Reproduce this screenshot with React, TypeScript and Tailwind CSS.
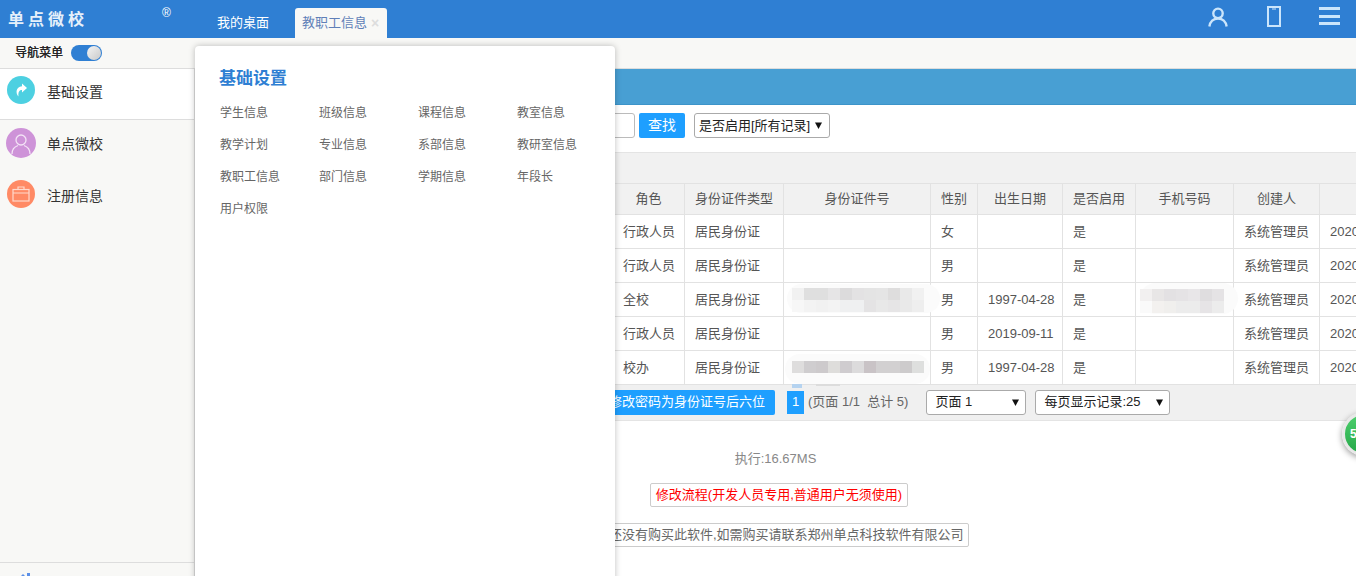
import React from 'react';

const cols = [417, 72, 99, 147, 47, 85, 73, 98, 86, 120];

const headers = ['', '角色', '身份证件类型', '身份证件号', '性别', '出生日期', '是否启用', '手机号码', '创建人', ''];

const rows = [
    { role: '行政人员', sex: '女', birth: '' },
    { role: '行政人员', sex: '男', birth: '' },
    { role: '全校', sex: '男', birth: '1997-04-28', idBlur: 'a', phoneBlur: true },
    { role: '行政人员', sex: '男', birth: '2019-09-11' },
    { role: '校办', sex: '男', birth: '1997-04-28', idBlur: 'b' },
];

const menuItems = [
    '学生信息', '班级信息', '课程信息', '教室信息',
    '教学计划', '专业信息', '系部信息', '教研室信息',
    '教职工信息', '部门信息', '学期信息', '年段长',
    '用户权限',
];

const blurA = [
    ['#f1f1f1', '#dfdfdf', '#dfdfdf', '#e6e5e6', '#dcdbdc', '#e3e2e3', '#e4e4e4', '#e5e5e5', '#dedddd', '#e9e9e9', '#f1f1f1'],
    ['#f7f7f7', '#f3f3f3', '#f1f1f1', '#f3f3f3', '#eff0f1', '#eff0f1', '#e4e3e4', '#e8e8e8', '#e6e5e6', '#e9e9e9', '#eeeeee'],
];
const blurB = [
    ['#dedddd', '#cfcdcf', '#cdcacc', '#dedddb', '#cfcccf', '#dcdbdc', '#c9c3c6', '#d2d0d1', '#d2d0d1', '#cdcbcc', '#dedfde'],
];
const blurPhone = [
    ['#f2f0f0', '#e8e6e6', '#e3e1e3', '#e5e3e5', '#e8e6e8', '#dfdddf', '#e5e3e5'],
    ['#fafafa', '#f3f1ef', '#f0efed', '#ececec', '#ececec', '#e6e4e6', '#ececec'],
];

function Blur({ blocks, className, children }: { blocks: string[][]; className: string; children?: React.ReactNode }) {
    return (
        <div className={`absolute z-10 rounded-2xl bg-[#fbfbfb] ${className}`}>
            {blocks.map((line, i) => (
                <div key={i} className="flex">
                    {line.map((c, j) => (
                        <div key={j} className="h-3 w-3" style={{ backgroundColor: c }} />
                    ))}
                </div>
            ))}
            {children}
        </div>
    );
}

function Caret() {
    return (
        <svg width="7" height="7" viewBox="0 0 7 7" className="shrink-0">
            <path d="M0 .5h7L3.500 7z" fill="#111" />
        </svg>
    );
}

function FakeSelect({ label, className }: { label: string; className: string }) {
    return (
        <div className={`flex h-[25px] items-center justify-between rounded-[3px] border border-[#aaa] bg-white text-[13px] text-[#222] ${className}`}>
            <span>{label}</span>
            <Caret />
        </div>
    );
}

export default function App() {
    return (
        <div className="relative h-[576px] w-[1356px] overflow-hidden bg-white font-['Liberation_Sans','Noto_Sans_CJK_SC',sans-serif] text-[13px] text-[#555]">
            {/* Top bar */}
            <div className="flex h-[38px] items-end bg-[#2f7fd3]">
                <div className="relative h-full w-[195px] shrink-0">
                    <div className="pl-2 pt-[8px] text-[16px] leading-[24px] font-bold tracking-[4px] text-[#e6f0fa]">单点微校</div>
                    <span className="absolute left-[162px] top-[4px] text-[12px] text-white">®</span>
                </div>
                <div className="flex h-[30px] w-[100px] items-center justify-center pr-[4px] text-white">我的桌面</div>
                <div className="flex h-[30px] w-[92px] items-center gap-[4px] rounded-t-[3px] bg-[#f8f8f6] pl-[7px] text-[#5f7fb8]">
                    教职工信息
                    <span className="text-[14px] font-bold leading-none text-[#ddd]">×</span>
                </div>
                <div className="ml-auto flex h-full items-start pr-[16px] pt-[6px]">
                    <svg width="20" height="20" viewBox="0 0 22 22" fill="none" stroke="#cbe5fb" strokeWidth="2.600" className="mr-[39px] mt-px">
                        <circle cx="11" cy="7" r="5.200" />
                        <path d="M1.500 21.500C2.500 15.500 6 12.800 11 12.800s8.500 2.700 9.500 8.700" />
                    </svg>
                    <svg width="14" height="21" viewBox="0 0 14 21" fill="none" stroke="#cbe5fb" strokeWidth="2" className="mr-[38px]">
                        <rect x="1" y="1" width="12" height="19" />
                        <path d="M5 3h4" strokeWidth="1" />
                    </svg>
                    <svg width="21" height="20" viewBox="0 0 21 20" fill="#cbe5fb">
                        <rect y="1" width="21" height="3" />
                        <rect y="9" width="21" height="3" />
                        <rect y="16" width="21" height="3" />
                    </svg>
                </div>
            </div>

            {/* Sub bar */}
            <div className="flex h-[31px] items-center border-b border-[#ddd] bg-[#f8f8f6] pl-[15px]">
                <span className="text-[12px] text-[#222] [text-shadow:0.3px_0_0_#222]">导航菜单</span>
                <div className="ml-2 flex h-4 w-[31px] items-center justify-end rounded-full bg-[#2f7fd3] pr-[1px]">
                    <div className="h-[14px] w-[14px] rounded-full bg-gradient-to-br from-[#f5f5f5] to-[#c9c9c9]" />
                </div>
            </div>

            <div className="flex h-[507px]">
                {/* Sidebar */}
                <div className="flex w-[195px] shrink-0 flex-col border-r border-[#ddd] bg-[#f8f8f6] text-[14px] text-[#333]">
                    <div className="flex h-[51px] items-center gap-3 border-b border-[#ddd] bg-white pb-1 pl-[7px]">
                        <div className="-mt-1 flex h-7 w-7 items-center justify-center rounded-full bg-[#4dd0e1]">
                            <svg width="16" height="16" viewBox="0 0 16 16" fill="#fff">
                                <path d="M9 1.500l5 4.500-5 4.500V8C6.500 8 5 9.500 5.500 14.500 2.500 11.500 2.500 5 9 4.300z" />
                            </svg>
                        </div>
                        基础设置
                    </div>
                    <div className="flex h-[52px] items-center gap-3 pb-1 pl-[6px]">
                        <div className="-mr-px -mt-[3px] flex h-[30px] w-[30px] items-center justify-center overflow-hidden rounded-full bg-[#ce93d8]">
                            <svg width="22" height="24" viewBox="0 0 22 24" fill="none" stroke="#f3e3f6" strokeWidth="1.300">
                                <circle cx="11" cy="9" r="5" />
                                <path d="M2 23c0-5 3-7.500 6-8.500M20 23c0-5-3-7.500-6-8.500" />
                            </svg>
                        </div>
                        单点微校
                    </div>
                    <div className="flex h-[52px] items-center gap-3 pb-1 pl-[7px]">
                        <div className="-mt-1 flex h-7 w-7 items-center justify-center rounded-full bg-[#ff8a65]">
                            <svg width="18" height="16" viewBox="0 0 18 16" fill="none" stroke="#ffd9cc" strokeWidth="1.200">
                                <rect x="1" y="3.500" width="16" height="11.500" />
                                <path d="M6 3.500V1h6v2.500M1 7h16" />
                            </svg>
                        </div>
                        注册信息
                    </div>
                    <div className="mt-auto h-[14px] overflow-hidden border-t border-[#ddd] pl-[19px] pt-[9px]">
                        <svg width="12" height="12" viewBox="0 0 12 12" fill="#5b8fe8">
                            <path d="M0 6l4-4 3 3v7H0zM8 1h3v11H8z" />
                        </svg>
                    </div>
                </div>

                {/* Main */}
                <div className="min-w-0 flex-1">
                    <div className="h-[36px] border-b border-[#3c94c9] bg-[#489fd3]" />
                    <div className="flex h-[47px] items-start gap-1 pl-[205px] pt-[8px]">
                        <div className="h-[25px] w-[235px] rounded-[3px] border border-[#bbb] bg-white" />
                        <div className="flex h-[25px] w-[46px] items-center justify-center rounded-[2px] bg-[#1e9fff] text-[14px] text-white">查找</div>
                        <FakeSelect label="是否启用[所有记录]" className="ml-[5px] w-[136px] pl-1 pr-[7px]" />
                    </div>
                    <div className="h-[31px] border-t border-[#e4e4e4] bg-[#f1f1f1]" />
                    <table className="w-[1244px] table-fixed border-collapse">
                        <colgroup>
                            {cols.map((w, i) => (
                                <col key={i} style={{ width: w }} />
                            ))}
                        </colgroup>
                        <thead>
                            <tr className="h-[31px] bg-[#f1f1f1]">
                                {headers.map((h, i) => (
                                    <th key={i} className="border border-[#e2e2e2] font-normal">{h}</th>
                                ))}
                            </tr>
                        </thead>
                        <tbody>
                            {rows.map((r, i) => (
                                <tr key={i} className="h-[34px]">
                                    <td className="border border-[#e2e2e2]" />
                                    <td className="border border-[#e2e2e2] pl-[10px]">{r.role}</td>
                                    <td className="border border-[#e2e2e2] pl-[10px]">居民身份证</td>
                                    <td className="relative border border-[#e2e2e2]">
                                        {r.idBlur === 'a' && <Blur blocks={blurA} className="left-[3px] top-[1px] pb-px pl-[5px] pr-[16px] pt-[4px]" />}
                                        {r.idBlur === 'b' && (
                                            <Blur blocks={blurB} className="left-[1px] top-[3px] pb-[11px] pl-[7px] pr-[6px] pt-[7px]">
                                                <div className="absolute left-[7px] top-[30px] h-[4px] w-[10px] bg-[#b5d3f0]" />
                                                <div className="absolute left-[31px] top-[30px] h-[2px] w-[24px] bg-[#dcdcdc]" />
                                            </Blur>
                                        )}
                                    </td>
                                    <td className="border border-[#e2e2e2] pl-[10px]">{r.sex}</td>
                                    <td className="border border-[#e2e2e2] pl-[10px]">{r.birth}</td>
                                    <td className="border border-[#e2e2e2] pl-[10px]">是</td>
                                    <td className="relative border border-[#e2e2e2]">
                                        {r.phoneBlur && <Blur blocks={blurPhone} className="left-[4px] top-0 pb-px pr-[14px] pt-[6px]" />}
                                    </td>
                                    <td className="border border-[#e2e2e2] pl-[10px]">系统管理员</td>
                                    <td className="border border-[#e2e2e2] pl-[10px] whitespace-nowrap">2020-01-01</td>
                                </tr>
                            ))}
                        </tbody>
                    </table>
                    {/* Pager */}
                    <div className="flex h-[36px] items-center border-b border-[#e4e4e4] bg-[#f0f0f0] pb-px pl-[404px]">
                        <div className="flex h-[25px] w-[176px] items-center justify-end rounded-[2px] bg-[#1e9fff] pr-[10px] text-[13px] whitespace-nowrap text-white">修改密码为身份证号后六位</div>
                        <div className="ml-3 flex h-[23px] w-[17px] items-center justify-center bg-[#1e9fff] text-white">1</div>
                        <span className="ml-1 whitespace-pre text-[#666]">(页面 1/1  总计 5)</span>
                        <FakeSelect label="页面 1" className="ml-[18px] w-[100px] pl-2 pr-[6px]" />
                        <FakeSelect label="每页显示记录:25" className="ml-[9px] w-[135px] pl-2 pr-[6px]" />
                    </div>
                    <div className="flex flex-col items-center pt-[30px]">
                        <div className="h-[15px] text-[13px] leading-[15px] text-[#888]">执行:16.67MS</div>
                        <div className="ml-[7px] mt-[17px] flex h-6 w-[258px] items-center justify-center rounded-[2px] border border-[#ccc] text-[13px] whitespace-nowrap text-[#f00]">修改流程(开发人员专用,普通用户无须使用)</div>
                        <div className="ml-[1px] mt-4 flex h-6 w-[385px] items-center justify-end rounded-[2px] border border-[#ccc] pr-1 text-[13px] whitespace-nowrap text-[#666]">您还没有购买此软件,如需购买请联系郑州单点科技软件有限公司</div>
                    </div>
                </div>
            </div>

            {/* Menu popup */}
            <div className="absolute left-[195px] top-[46px] z-20 h-[540px] w-[420px] rounded-t-[4px] bg-white pl-[25px] pt-[21px] shadow-[0_0_6px_rgba(0,0,0,0.25)]">
                <div className="-ml-px text-[17px] leading-[24px] font-bold text-[#2f7fd3]">基础设置</div>
                <div className="mt-[6px] grid w-[396px] grid-cols-4 text-[12px] text-[#666]">
                    {menuItems.map((m) => (
                        <div key={m} className="h-[32px] leading-[32px]">{m}</div>
                    ))}
                </div>
            </div>

            {/* Floating badge */}
            <div className="absolute left-[1342px] top-[412px] flex h-[44px] w-[44px] items-center rounded-full border-[3px] border-[#e8e8e8] bg-gradient-to-b from-[#4ccf6c] to-[#25a84a] pl-[5px] text-[12px] font-bold text-white shadow-[0_2px_6px_rgba(0,0,0,0.4)]">
                51
            </div>
        </div>
    );
}
